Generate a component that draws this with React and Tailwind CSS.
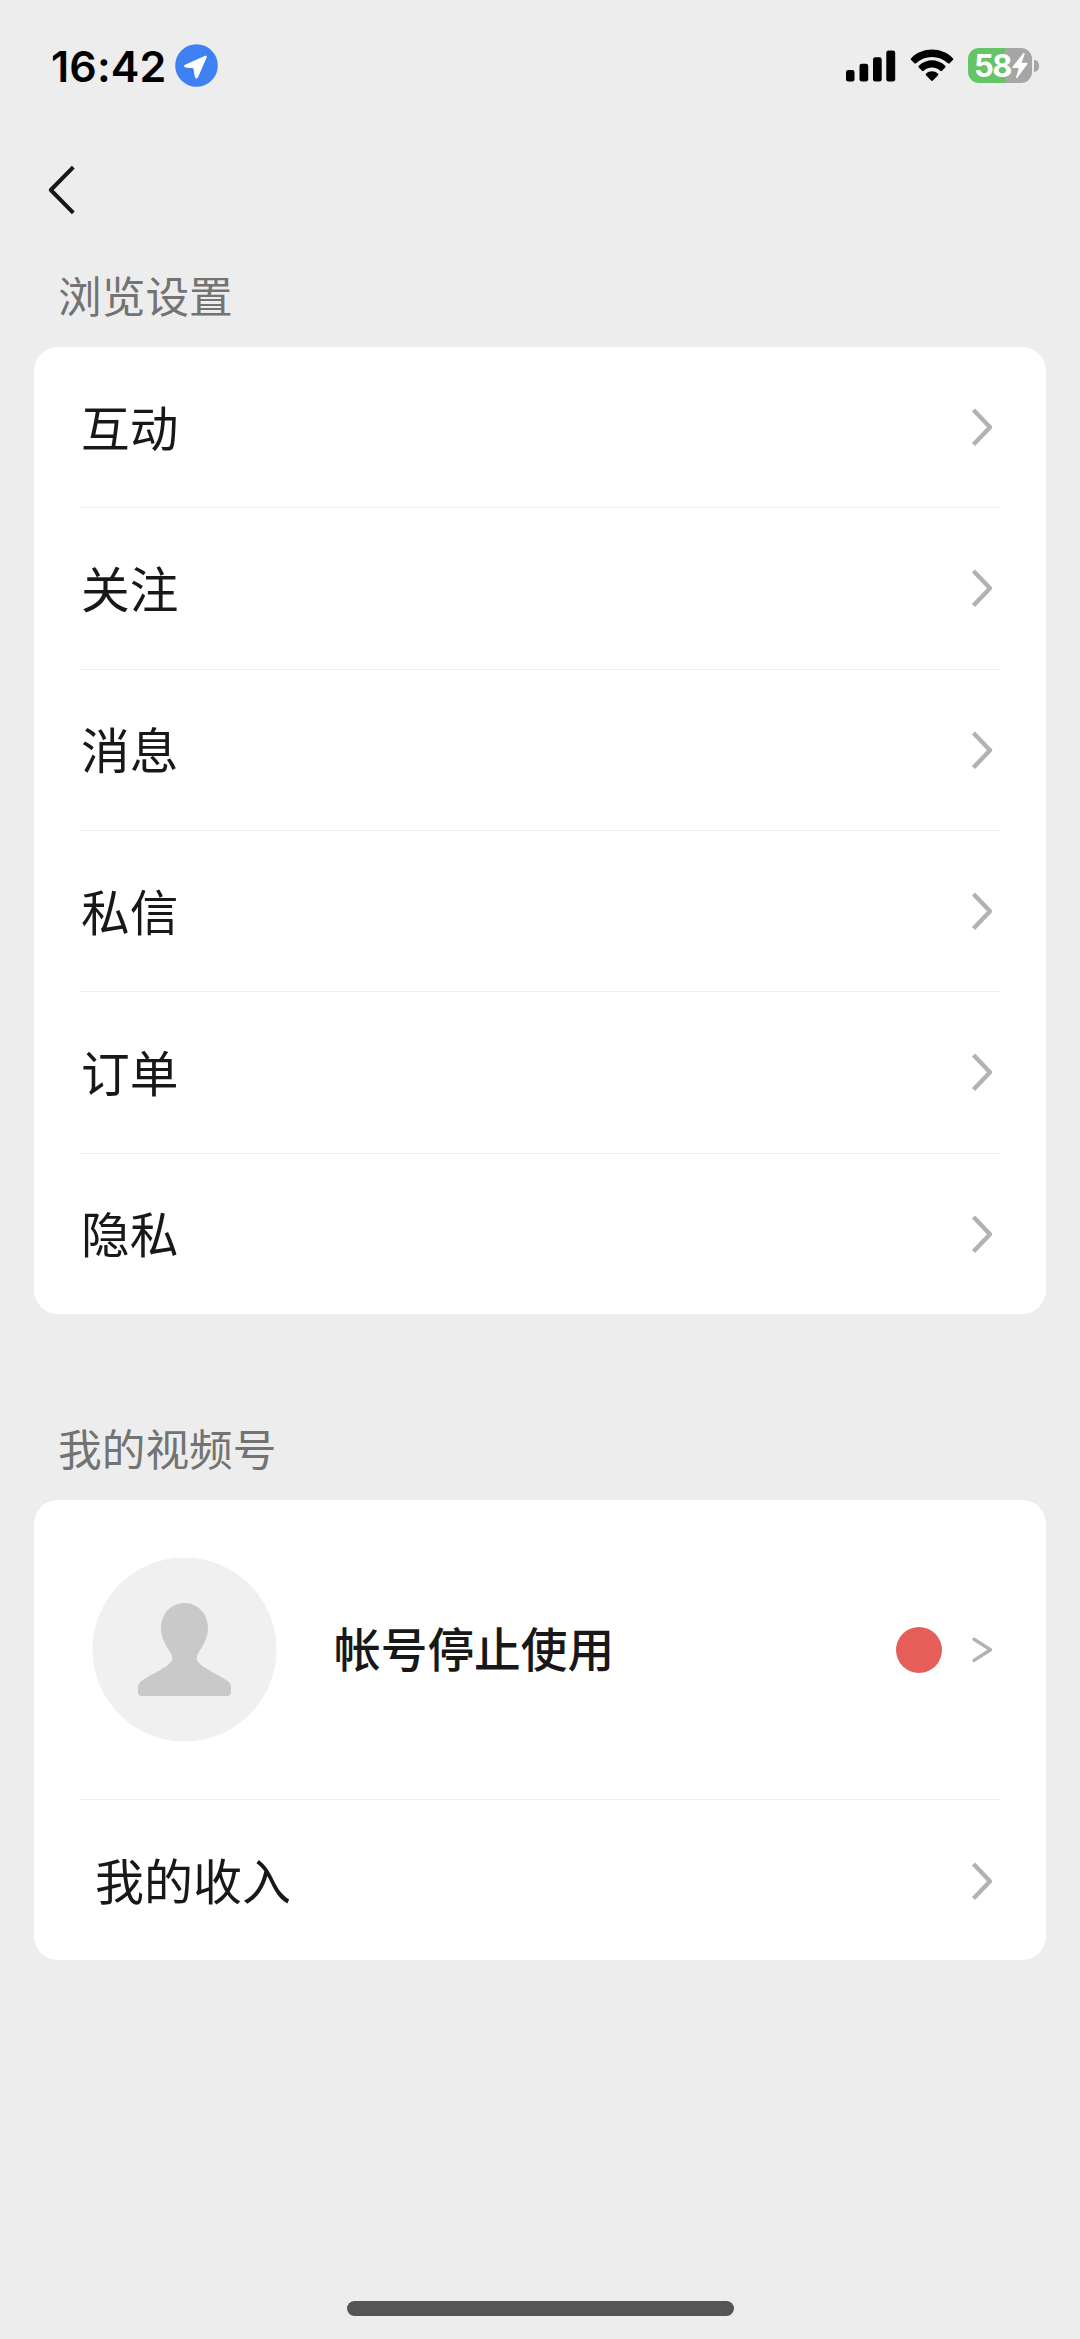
const settings = ["互动", "关注", "消息", "私信", "订单", "隐私"];

function Chevron({ small }) {
  return (
    <svg className="h-[44px] w-[26px] shrink-0" viewBox="0 0 26 44" fill="none" stroke="#b2b2b2" strokeLinecap="round" strokeLinejoin="round">
      {small ? (
        <path d="M6 11.2L22.5 21.8L6 32.4" strokeWidth="3.4" />
      ) : (
        <path d="M5.5 5.1L22 22.3L5.5 39.5" strokeWidth="4.4" strokeLinecap="butt" />
      )}
    </svg>
  );
}

function StatusBar() {
  return (
    <header className="flex h-[131px] items-center justify-between pl-[51px] pr-[41px]">
      <div className="flex items-center">
        <span className="w-[124px] whitespace-nowrap font-['Inter'] text-[43px] leading-[50px] font-semibold tracking-[0.1px] text-black">
          16:42
        </span>
        <svg className="h-[43px] w-[43px]" viewBox="0 0 43 43">
          <circle cx="21.5" cy="21.5" r="21.3" fill="#3f80f3" />
          <path
            d="M30.3 12.2L9.5 21.5Q8.8 22.6 10.5 23L18.8 23.8L20.4 33.3Q21.2 35 22.4 33.5L31.3 13.2Q31.5 11.8 30.3 12.2Z"
            fill="white"
            stroke="white"
            strokeWidth="1"
            strokeLinejoin="round"
          />
        </svg>
      </div>
      <div className="flex items-center">
        <svg className="mr-[14px] h-[32px] w-[51px]" viewBox="0 0 51 32">
          <rect x="1" y="20" width="8.5" height="11.5" rx="2.3" />
          <rect x="14.5" y="13.8" width="8.7" height="17.7" rx="2.3" />
          <rect x="28" y="7.2" width="8.7" height="24.3" rx="2.3" />
          <rect x="41.3" y="0.5" width="8.9" height="31" rx="2.3" />
        </svg>
        <svg className="mr-[14px] h-[33px] w-[44px]" viewBox="0 0 44 33">
          <path d="M1.2 9.2C12.5-2.3 31.5-2.3 42.8 9.2Q43.7 10.2 42.8 11.1L39.7 14.2Q38.8 15 37.9 14.2C28.9 5.8 15.1 5.8 6.1 14.2Q5.2 15 4.3 14.2L1.2 11.1Q0.3 10.2 1.2 9.2Z" />
          <path d="M8.8 16.8C16.2 9.4 27.8 9.4 35.2 16.8Q36 17.7 35.2 18.6L32 21.8Q31.1 22.6 30.2 21.8C25.6 17.5 18.4 17.5 13.8 21.8Q12.9 22.6 12 21.8L8.8 18.6Q8 17.7 8.8 16.8Z" />
          <path d="M16.2 24.5C19.5 21.5 24.5 21.5 27.8 24.5Q28.8 25.4 27.8 26.4L22.9 31.6Q22 32.4 21.1 31.6L16.2 26.4Q15.2 25.4 16.2 24.5Z" />
        </svg>
        <div className="flex h-[35px] w-[64px] items-center rounded-[11px] bg-[linear-gradient(90deg,#65c465_58%,#a6a6a6_58%)] pl-[6px]">
          <span className="w-[37px] whitespace-nowrap pt-[1px] font-['Inter'] text-[31px] leading-[34px] font-bold tracking-[-1.5px] text-white">58</span>
          <svg className="h-[27px] w-[18px]" viewBox="0 0 18 27" fill="white">
            <path d="M12.5 1L1.5 14.8Q1 16 2.3 16H7.8L5 25.5Q5.3 26.6 6.5 25.5L16.5 12Q17 10.8 15.8 10.7H10.5L13.7 2Q13.7 0.5 12.5 1Z" />
          </svg>
        </div>
        <div className="ml-[2px] h-[12px] w-[5px] rounded-r-full bg-[#a6a6a6]" />
      </div>
    </header>
  );
}

function SectionTitle({ children }) {
  return <h2 className="pl-[58px] text-[43.7px] leading-[60px] font-normal text-[#737373]">{children}</h2>;
}

export default function App() {
  return (
    <div className="flex h-[2339px] w-[1080px] flex-col bg-[#ededed] font-['Noto_Sans_CJK_SC',sans-serif] text-[#181818]">
      <StatusBar />

      <nav className="flex h-[133px] items-start pt-[32px] pl-[44px]">
        <svg className="h-[54px] w-[34px]" viewBox="0 0 34 54" fill="none" stroke="#181818" strokeWidth="4">
          <path d="M29.3 4.2L6.8 27L29.3 49.8" strokeLinejoin="round" />
        </svg>
      </nav>

      <section>
        <SectionTitle>浏览设置</SectionTitle>
        <ul className="mx-[34px] mt-[23px] flex h-[967px] flex-col rounded-[24px] bg-white pr-[46px] pl-[46px]">
          {settings.map((label) => (
            <li key={label} className="flex flex-1 items-center justify-between border-b border-[#eeeeee] pr-[6px] last:border-b-0">
              <span className="pb-[3px] pl-[1px] text-[48.7px] leading-[70px]">{label}</span>
              <Chevron />
            </li>
          ))}
        </ul>
      </section>

      <section className="mt-[103px]">
        <SectionTitle>我的视频号</SectionTitle>
        <div className="mx-[34px] mt-[23px] flex h-[460px] flex-col rounded-[24px] bg-white pr-[46px] pl-[46px]">
          <div className="flex h-[300px] items-center border-b border-[#f0f0f0] pr-[6px] pl-[12px]">
            <svg className="h-[185px] w-[185px]" viewBox="0 0 185 185">
              <circle cx="92.5" cy="92.5" r="92" fill="#f0f0f0" />
              <path
                d="M92.5 46C106 46 116 57 116 71C116 80 112 87 107 95C104 100 103.5 103 108 107C116 114 126 117 134 123Q139 126 139 130V135Q139 139 135 139H50Q46 139 46 135V130Q46 126 51 123C59 117 69 114 77 107C81.5 103 81 100 78 95C73 87 69 80 69 71C69 57 79 46 92.5 46Z"
                fill="#c9c9c9"
              />
            </svg>
            <span className="ml-[57px] pb-[5px] text-[46.7px] leading-[66px] font-medium">帐号停止使用</span>
            <span className="mr-[26px] ml-auto h-[46px] w-[46px] rounded-full bg-[#e75e58]" />
            <Chevron small />
          </div>
          <div className="flex flex-1 items-center justify-between pr-[6px] pl-[15px]">
            <span className="pb-[2px] text-[49px] leading-[70px]">我的收入</span>
            <div className="pt-[2px]">
              <Chevron />
            </div>
          </div>
        </div>
      </section>

      <div className="mt-auto mb-[23px] h-[15px] w-[387px] self-center rounded-full bg-[#555555]" />
    </div>
  );
}
